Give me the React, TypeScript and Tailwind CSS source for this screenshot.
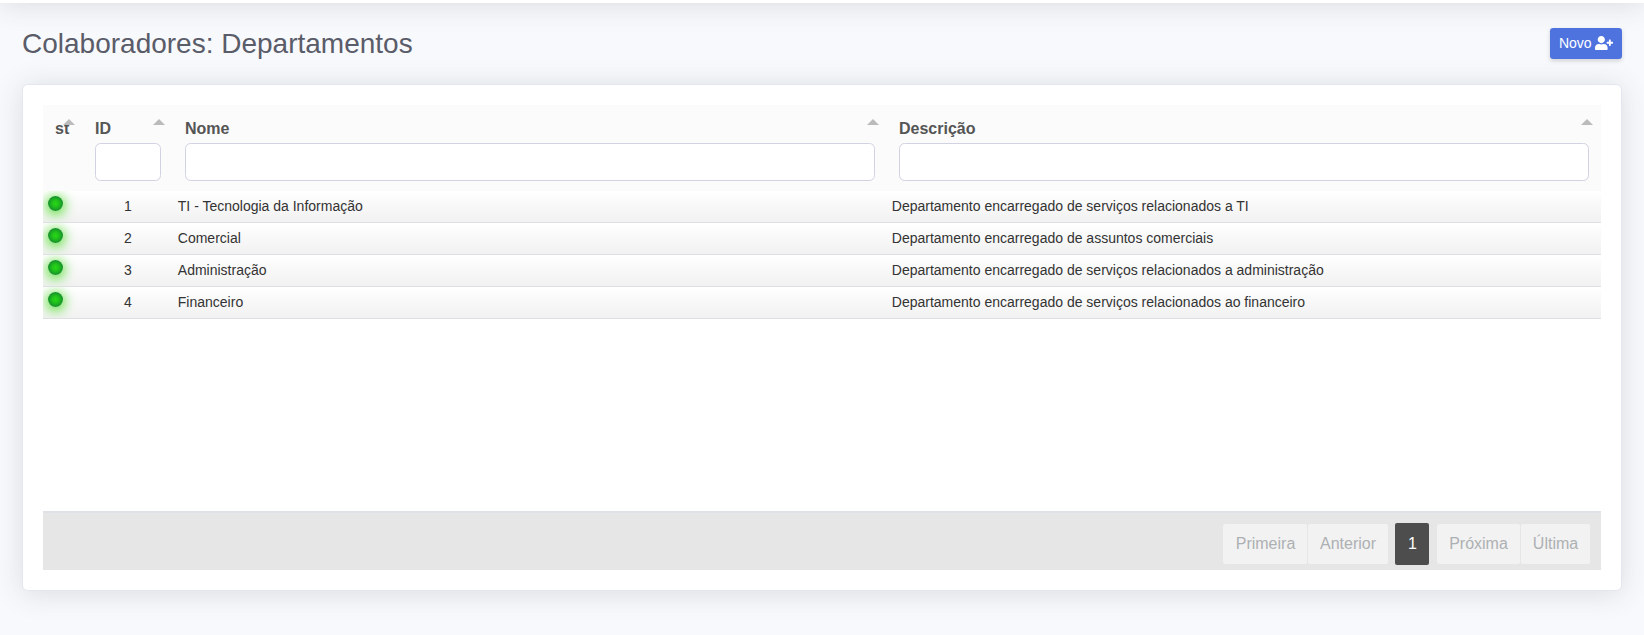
import { FaUserPlus } from 'react-icons/fa';

const rows = [
  { id: 1, nome: 'TI - Tecnologia da Informação', descricao: 'Departamento encarregado de serviços relacionados a TI' },
  { id: 2, nome: 'Comercial', descricao: 'Departamento encarregado de assuntos comerciais' },
  { id: 3, nome: 'Administração', descricao: 'Departamento encarregado de serviços relacionados a administração' },
  { id: 4, nome: 'Financeiro', descricao: 'Departamento encarregado de serviços relacionados ao financeiro' },
];

function HeaderCell({ title, filter = true }: { title: string; filter?: boolean }) {
  return (
    <div className="relative px-3 pt-[11px]">
      <div className="h-[27px] whitespace-nowrap text-base leading-[26px] font-bold text-[#555]">{title}</div>
      <span className="absolute top-[14px] right-2 h-0 w-0 border-x-[6px] border-b-[6px] border-x-transparent border-b-[#bbb]" />
      {filter && (
        <input
          aria-label={title}
          className="block h-[38px] w-full rounded-[5.6px] border border-[#d1d3e2] bg-white px-3 outline-none"
        />
      )}
    </div>
  );
}

function PageButton({ label, className = '' }: { label: string; className?: string }) {
  return (
    <button disabled className={`h-10 rounded-[2px] bg-[#f2f2f2] text-base text-[#adb0b3] ${className}`}>
      {label}
    </button>
  );
}

export default function App() {
  return (
    <div className="flex h-[635px] w-full flex-col overflow-hidden bg-[#f8f9fc] font-['Liberation_Sans',Arial,sans-serif]">
      <div className="-mt-[67px] h-[70px] shrink-0 bg-white shadow-[0_2.4px_28px_0_rgba(58,59,69,0.15)]" />
      <main className="px-[22px]">
        <div className="flex h-[81px] items-start justify-between">
          <h1 className="pt-6 text-[28px] leading-[34px] text-[#5a5c69]">Colaboradores: Departamentos</h1>
          <button className="mt-[25px] flex h-[31px] w-[72px] items-center justify-center rounded-[3.2px] bg-[#4e73df] pb-px text-sm text-white shadow-[0_2px_4px_0_rgba(58,59,69,0.2)]">
            Novo
            <FaUserPlus className="ml-[3.4px] h-[14.4px] w-[18px]" />
          </button>
        </div>
        <section className="h-[507px] rounded-[5.6px] border border-[#e3e6f0] bg-white p-5 shadow-[0_2.4px_28px_0_rgba(58,59,69,0.15)]">
          <div className="flex h-full flex-col">
            <div className="grid h-[86px] shrink-0 grid-cols-[40px_90px_1fr_1fr] bg-[#fbfbfb]">
              <HeaderCell title="st" filter={false} />
              <HeaderCell title="ID" />
              <HeaderCell title="Nome" />
              <HeaderCell title="Descrição" />
            </div>
            <div className="flex-1">
              {rows.map((row) => (
                <div
                  key={row.id}
                  className="grid h-8 grid-cols-[40px_90px_1fr_1fr] border-b border-[#dddfe3] bg-linear-to-b from-white to-[#f1f1f1] text-sm leading-[31px] text-[#333]"
                >
                  <div className="overflow-hidden pt-[5px] pl-[5px]">
                    <div className="h-[15px] w-[15px] rounded-full bg-[radial-gradient(circle_closest-side,#27d615_0%,#22c51a_40%,#15902a_100%)] shadow-[0_2px_12px_2px_#5fe03c]" />
                  </div>
                  <div className="px-1 text-center">{row.id}</div>
                  <div className="px-1 pl-[4.8px]">{row.nome}</div>
                  <div className="px-1 pl-[4.8px]">{row.descricao}</div>
                </div>
              ))}
            </div>
            <div className="flex h-[59px] shrink-0 items-center justify-end border-t-2 border-[#dee2e6] bg-[#e6e6e6] pt-[5px] pr-[11px]">
              <PageButton label="Primeira" className="w-[84px] pl-px" />
              <PageButton label="Anterior" className="ml-px w-20" />
              <button className="mx-[7px] h-[42px] w-[34px] rounded-[2px] bg-[#4d4d4d] pl-px text-base text-white">1</button>
              <PageButton label="Próxima" className="ml-px w-[83px]" />
              <PageButton label="Última" className="ml-px w-[69px]" />
            </div>
          </div>
        </section>
      </main>
    </div>
  );
}
